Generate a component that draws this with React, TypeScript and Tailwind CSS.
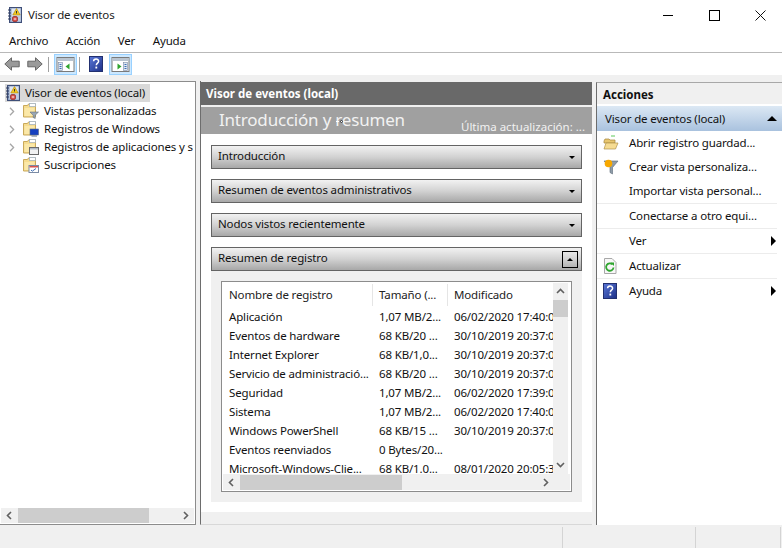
import React from "react";

function LogIcon() {
  return (
    <svg width="16" height="16" viewBox="0 0 16 16" className="shrink-0">
      <rect x="2.500" y="0.500" width="12" height="15" fill="#8ea2c4" stroke="#3f4f78" />
      <rect x="4.500" y="1.500" width="9" height="13" fill="#dfe6f2" />
      <path d="M1 3h3M1 6h3M1 9h3M1 12h3" stroke="#2e3c60" />
      <path d="M5 10h8M5 12h8M5 14h8" stroke="#9db3d6" />
      <path d="M9.500 1.500 L13.200 8 H5.800 Z" fill="#f6cb1e" stroke="#a8820c" strokeWidth="0.6" />
      <rect x="9" y="4" width="1" height="2.500" fill="#333" />
      <rect x="5.500" y="9.500" width="5" height="5" rx="1.500" fill="#d8504a" stroke="#8e2420" strokeWidth="0.7" />
      <path d="M6.800 12h2.400" stroke="#fff" strokeWidth="1" />
    </svg>
  );
}

function Folder({ children }: { children?: React.ReactNode }) {
  return (
    <svg width="16" height="16" viewBox="0 0 16 16" className="shrink-0">
      <path d="M0.500 2.500h4l1-1.500h7v13h-12z" fill="#f6dc8f" stroke="#c9a95a" />
      <rect x="6.500" y="0.500" width="6" height="3" fill="#fff" stroke="#9ab" strokeWidth="0.7" />
      <path d="M1.500 5h10v8h-10z" fill="#fbe8a8" />
      {children}
    </svg>
  );
}

function Chevron() {
  return (
    <svg width="6" height="9" viewBox="0 0 6 9" className="shrink-0">
      <path d="M1 0.800 L4.600 4.500 L1 8.200" fill="none" stroke="#a6a6a6" strokeWidth="1.300" />
    </svg>
  );
}

function TreeRow({ label, icon, chevron }: { label: string; icon: React.ReactNode; chevron: boolean }) {
  return (
    <div className="h-[18px] flex items-center whitespace-nowrap pl-[9px]">
      <div className="w-[14px] flex shrink-0">{chevron && <Chevron />}</div>
      {icon}
      <span className="ml-[5px]">{label}</span>
    </div>
  );
}

function HelpIcon() {
  return (
    <svg width="14" height="16" viewBox="0 0 14 16" className="shrink-0">
      <defs>
        <linearGradient id="hg" x1="0" y1="0" x2="1" y2="1">
          <stop offset="0" stopColor="#5a78d8" />
          <stop offset="1" stopColor="#1c2f86" />
        </linearGradient>
      </defs>
      <rect x="0.500" y="0.500" width="13" height="15" fill="url(#hg)" stroke="#223070" />
      <path d="M4.600 5.200c0-3 5-3 5 0c0 1.900-2.300 2-2.300 4" fill="none" stroke="#fff" strokeWidth="1.500" />
      <rect x="6.400" y="10.600" width="1.800" height="1.900" fill="#fff" />
    </svg>
  );
}

function PaneIcon({ right }: { right: boolean }) {
  return (
    <svg width="19" height="15" viewBox="0 0 18 15">
      <rect x="0.500" y="0.500" width="17" height="14" fill="#fff" stroke="#7a7a7a" />
      <rect x="1" y="1" width="16" height="3" fill="#b9c4d0" />
      {right ? (
        <>
          <path d="M6 6.500v6l4-3z" fill="#2fa52f" />
          <rect x="12" y="5.500" width="4" height="8" fill="#dfe7f2" stroke="#7a8aa5" strokeWidth="0.6" />
          <path d="M13 7.500h2M13 9.500h2M13 11.500h2" stroke="#3f6fb5" />
        </>
      ) : (
        <>
          <rect x="2" y="5.500" width="4" height="8" fill="#dfe7f2" stroke="#7a8aa5" strokeWidth="0.6" />
          <path d="M3 7.500h2M3 9.500h2M3 11.500h2" stroke="#3f6fb5" />
          <path d="M13 6.500v6l-4-3z" fill="#2fa52f" />
        </>
      )}
    </svg>
  );
}

function NavArrow({ dir }: { dir: "l" | "r" }) {
  return (
    <svg width="16" height="14" viewBox="0 0 16 14" className={dir === "r" ? "-scale-x-100" : ""}>
      <path d="M7.500 0.800 L0.800 7 L7.500 13.200 V9.800 H15.200 V4.200 H7.500 Z" fill="#9a9a9a" stroke="#666666" />
    </svg>
  );
}

function SectionBar({ label, open }: { label: string; open?: boolean }) {
  return (
    <div className="h-[24px] border border-[#646464] bg-gradient-to-b from-[#f2f2f2] via-[#d2d2d2] to-[#a8a8a8] flex items-center pl-[6px] pr-[3px]">
      <span className="flex-1 -mt-[3px]">{label}</span>
      {open ? (
        <div className="w-[16px] h-[17px] border border-black flex items-center justify-center">
          <div className="w-0 h-0 border-x-[3px] border-x-transparent border-b-[3px] border-b-black" />
        </div>
      ) : (
        <div className="w-0 h-0 border-x-[3px] border-x-transparent border-t-[3px] border-t-black mr-[3px]" />
      )}
    </div>
  );
}

const rows = [
  ["Aplicación", "1,07 MB/2...", "06/02/2020 17:40:0"],
  ["Eventos de hardware", "68 KB/20 ...", "30/10/2019 20:37:0"],
  ["Internet Explorer", "68 KB/1,0...", "30/10/2019 20:37:0"],
  ["Servicio de administració...", "68 KB/20 ...", "30/10/2019 20:37:0"],
  ["Seguridad", "1,07 MB/2...", "06/02/2020 17:39:0"],
  ["Sistema", "1,07 MB/2...", "06/02/2020 17:40:0"],
  ["Windows PowerShell", "68 KB/15 ...", "30/10/2019 20:37:0"],
  ["Eventos reenviados", "0 Bytes/20...", ""],
  ["Microsoft-Windows-Clie...", "68 KB/1.0...", "08/01/2020 20:05:3"],
];

function Action({ label, icon, arrow, sep, short, last }: { label: string; icon?: React.ReactNode; arrow?: boolean; sep?: boolean; short?: boolean; last?: boolean }) {
  return (
    <div className={`flex items-center ${short ? "h-[24px]" : "h-[25px]"} pl-[6px] mr-[5px] ${sep ? "border-b border-[#ececec]" : ""} ${last ? "pb-px" : ""}`}>
      <div className="w-[26px] flex shrink-0">{icon}</div>
      <span className="flex-1 whitespace-nowrap">{label}</span>
      {arrow && <div className="w-0 h-0 border-y-[5px] border-y-transparent border-l-[5px] border-l-black mr-[1px]" />}
    </div>
  );
}

function ScrollArrow({ d }: { d: string }) {
  return (
    <svg width="9" height="9" viewBox="0 0 9 9" className="shrink-0">
      <path d={d} fill="none" stroke="#606060" strokeWidth="1.600" />
    </svg>
  );
}

export default function App() {
  return (
    <div className="w-[782px] h-[548px] flex flex-col bg-[#f0f0f0] overflow-hidden text-[11.5px] tracking-[-0.15px] text-[#111] font-['Noto_Sans','Liberation_Sans',sans-serif]">
      {/* title */}
      <div className="h-[30px] bg-white flex items-center pl-[7px] shrink-0">
        <LogIcon />
        <span className="ml-[5px] text-[#222]">Visor de eventos</span>
        <div className="ml-auto -mr-[1px] flex items-center">
          <div className="w-[46px] h-[30px] flex items-center justify-center">
            <div className="w-[10px] h-px bg-black" />
          </div>
          <div className="w-[46px] h-[30px] flex items-center justify-center">
            <div className="w-[11px] h-[11px] border border-black" />
          </div>
          <div className="w-[46px] h-[30px] flex items-center justify-center">
            <svg width="11" height="11" viewBox="0 0 11 11">
              <path d="M0.500 0.500L10.500 10.500M10.500 0.500L0.500 10.500" stroke="#111" />
            </svg>
          </div>
        </div>
      </div>
      {/* menu */}
      <div className="h-[23px] bg-white border-b border-[#b9b9b9] flex items-center pl-[9px] gap-[17.5px] shrink-0">
        <span>Archivo</span>
        <span>Acción</span>
        <span>Ver</span>
        <span>Ayuda</span>
      </div>
      {/* toolbar */}
      <div className="h-[22px] bg-white flex items-center pl-[4px] shrink-0">
        <NavArrow dir="l" />
        <div className="w-[7px]" />
        <NavArrow dir="r" />
        <div className="w-px h-[15px] bg-[#a0a0a0] ml-[5px]" />
        <div className="ml-[5px] w-[23px] h-[21px] bg-[#cce8ff] border border-[#99d1ff] flex items-center justify-center">
          <PaneIcon right={false} />
        </div>
        <div className="w-px h-[15px] bg-[#a0a0a0] ml-[2px]" />
        <div className="ml-[9px]">
          <HelpIcon />
        </div>
        <div className="ml-[6px] w-[23px] h-[21px] bg-[#cce8ff] border border-[#99d1ff] flex items-center justify-center">
          <PaneIcon right />
        </div>
      </div>
      <div className="h-[6px] shrink-0" />
      {/* main */}
      <div className="flex-1 flex min-h-0">
        {/* left */}
        <div className="w-[196px] h-[444px] bg-white border-t border-r border-b border-[#8c8c8c] flex flex-col shrink-0 overflow-hidden">
          <div className="pt-[2px] flex-1">
            <div className="ml-[5px] w-[145px] h-[18px] bg-[#d9d9d9] flex items-center">
              <LogIcon />
              <span className="ml-[4px] whitespace-nowrap">Visor de eventos (local)</span>
            </div>
            <TreeRow
              label="Vistas personalizadas"
              chevron
              icon={
                <Folder>
                  <path d="M7 9h8.500l-3.300 3.300v3.200l-2-1v-2.200z" fill="#9aa7b5" stroke="#55616d" strokeWidth="0.5" />
                </Folder>
              }
            />
            <TreeRow
              label="Registros de Windows"
              chevron
              icon={
                <Folder>
                  <rect x="7" y="8" width="8.500" height="6" fill="#1540c0" stroke="#5a6a80" strokeWidth="0.6" />
                  <rect x="8.500" y="14.300" width="5.500" height="1.400" fill="#8c98a8" />
                </Folder>
              }
            />
            <TreeRow
              label="Registros de aplicaciones y s"
              chevron
              icon={
                <Folder>
                  <rect x="6.500" y="8.500" width="9" height="7" fill="#f2f2f2" stroke="#6a6a6a" />
                  <rect x="7" y="9" width="8" height="1.500" fill="#b0bac8" />
                </Folder>
              }
            />
            <TreeRow
              label="Suscripciones"
              chevron={false}
              icon={
                <Folder>
                  <rect x="6" y="8.500" width="9.500" height="7" fill="#fff" stroke="#7b8ba5" />
                  <rect x="6.500" y="9" width="8.500" height="1.500" fill="#d9534f" />
                  <path d="M8 13l1.300 1.200L13 11.500" fill="none" stroke="#3f6fb5" />
                </Folder>
              }
            />
          </div>
          <div className="h-[15px] mb-[1px] mx-[1px] bg-[#f0f0f0] flex items-center shrink-0">
            <div className="w-[17px] flex justify-center">
              <ScrollArrow d="M6 1L2.500 4.500L6 8" />
            </div>
            <div className="w-[131px] h-[15px] bg-[#cdcdcd]" />
            <div className="flex-1 flex justify-end pr-[4px]">
              <ScrollArrow d="M3 1L6.500 4.500L3 8" />
            </div>
          </div>
        </div>
        {/* center */}
        <div className="ml-[4px] w-[392px] h-[444px] border-l border-b border-[#6d6d6d] border-b-[#d8d8d8] flex flex-col shrink-0 relative">
          <div className="h-[23px] mt-px bg-[#696969] text-white font-bold tracking-normal flex items-center pl-[6px] pt-px shrink-0 -ml-px">
            Visor de eventos (local)
          </div>
          <div className="h-[27px] mt-[2px] bg-[#a0a0a0] flex items-center pl-[18px] pr-[7px] text-[#f2f2f2] shrink-0">
            <span className="text-[17px] tracking-[-0.2px] leading-none -mt-[3px] flex-1 whitespace-nowrap">Introducción y resumen</span>
            <span className="mt-[12px] whitespace-nowrap tracking-normal">Última actualización: ...</span>
          </div>
          <div className="absolute left-[135px] top-[39px] flex items-center gap-px">
            <div className="w-[3px] h-px bg-white" />
            <div className="w-[3px] h-[3px] rounded-full bg-white border border-[#333]" />
          </div>
          <div className="bg-white h-[378px] shrink-0 px-[10px] pt-[11px] flex flex-col gap-[10px]">
            <SectionBar label="Introducción" />
            <SectionBar label="Resumen de eventos administrativos" />
            <SectionBar label="Nodos vistos recientemente" />
            <div className="flex flex-col">
              <SectionBar label="Resumen de registro" open />
              <div className="h-[231px] bg-[#f0f0f0] p-[10px]">
                <div className="h-[211px] border border-[#8c8c8c] bg-white flex flex-col overflow-hidden">
                  <div className="flex-1 flex min-h-0 pl-px">
                    <div className="flex-1 overflow-hidden min-w-0">
                      <div className="flex h-[22px] mt-[2px] items-center text-[#222] whitespace-nowrap">
                        <div className="w-[150px] pl-[6px] h-full flex items-center border-r border-[#e5e5e5]">Nombre de registro</div>
                        <div className="w-[75px] pl-[6px] h-full flex items-center border-r border-[#e5e5e5]">Tamaño (...</div>
                        <div className="pl-[6px]">Modificado</div>
                      </div>
                      <div className="mt-px">
                        {rows.map((r) => (
                          <div key={r[0]} className="flex h-[19px] items-center whitespace-nowrap">
                            <div className="w-[150px] pl-[6px] overflow-hidden">{r[0]}</div>
                            <div className="w-[75px] pl-[6px] overflow-hidden">{r[1]}</div>
                            <div className="pl-[6px] w-[105px] overflow-hidden">{r[2]}</div>
                          </div>
                        ))}
                      </div>
                    </div>
                    <div className="w-[15px] mr-[3px] mt-px bg-[#f0f0f0] flex flex-col items-center shrink-0">
                      <div className="h-[17px] flex items-center justify-center">
                        <ScrollArrow d="M1 6L4.500 2.500L8 6" />
                      </div>
                      <div className="w-full h-[17px] bg-[#cdcdcd]" />
                      <div className="flex-1" />
                      <div className="h-[17px] flex items-center justify-center mb-[1px]">
                        <ScrollArrow d="M1 3L4.500 6.500L8 3" />
                      </div>
                    </div>
                  </div>
                  <div className="h-[16px] bg-[#f0f0f0] flex items-center mb-px mx-px shrink-0">
                    <div className="w-[17px] flex justify-center">
                      <ScrollArrow d="M6 1L2.500 4.500L6 8" />
                    </div>
                    <div className="w-[162px] h-[15px] bg-[#cdcdcd]" />
                    <div className="w-[148px] flex justify-end">
                      <ScrollArrow d="M3 1L6.500 4.500L3 8" />
                    </div>
                  </div>
                </div>
              </div>
            </div>
          </div>
        </div>
        {/* right */}
        <div className="ml-[4px] flex-1 h-[443px] mt-px bg-white border-l border-[#6d6d6d] border-t border-t-[#a8a8a8] flex flex-col">
          <div className="h-[21px] bg-[#f0f0f0] font-bold tracking-normal flex items-center pl-[6px] pt-[2px] shrink-0">Acciones</div>
          <div className="h-[25px] mt-[2px] bg-gradient-to-b from-[#dce8f4] to-[#a9c2de] flex items-center pl-[8px] pr-[5px] shrink-0">
            <span className="flex-1">Visor de eventos (local)</span>
            <div className="w-0 h-0 border-x-[5px] border-x-transparent border-b-[5px] border-b-black" />
          </div>
          <div className="flex flex-col">
            <Action
              short
              label="Abrir registro guardad..."
              icon={
                <svg width="16" height="16" viewBox="0 0 16 16">
                  <path d="M8 1h4" stroke="#5ac85a" />
                  <path d="M1 6l1-2h4l1 1h5v3H1z" fill="#e8c66e" stroke="#a5843c" strokeWidth="0.7" />
                  <path d="M1 14l2-6h12l-2.500 6z" fill="#f6dc92" stroke="#b0924a" strokeWidth="0.7" />
                </svg>
              }
            />
            <Action
              short
              label="Crear vista personaliza..."
              icon={
                <svg width="16" height="16" viewBox="0 0 16 16">
                  <path d="M1 2h14L9.500 8.500V15L7 13.500V8.500z" fill="#8f9daa" stroke="#5b6875" strokeWidth="0.6" />
                  <circle cx="5.500" cy="4.500" r="3.800" fill="#f7a800" />
                </svg>
              }
            />
            <Action label="Importar vista personal..." sep />
            <Action label="Conectarse a otro equi..." sep />
            <Action label="Ver" arrow sep />
            <Action
              label="Actualizar"
              sep
              icon={
                <svg width="14" height="16" viewBox="0 0 14 16">
                  <path d="M1.500 0.500h7.500l4 4v11h-11.500z" fill="#f7f7f7" stroke="#a8a8a8" />
                  <path d="M10.500 9.500a3.700 3.700 0 1 1-1-3" fill="none" stroke="#2fa52f" strokeWidth="1.800" />
                  <path d="M7.500 4.500h3.500v3.500z" fill="#2fa52f" />
                </svg>
              }
            />
            <Action label="Ayuda" arrow last icon={<HelpIcon />} />
          </div>
        </div>
      </div>
      {/* status */}
      <div className="h-[24px] flex shrink-0 pt-[3px]">
        <div className="w-[563px] border-r border-[#d4d4d4]" />
        <div className="w-[133px] border-r border-[#d4d4d4]" />
        <div className="w-[85px] border-r border-[#d4d4d4]" />
      </div>
    </div>
  );
}
